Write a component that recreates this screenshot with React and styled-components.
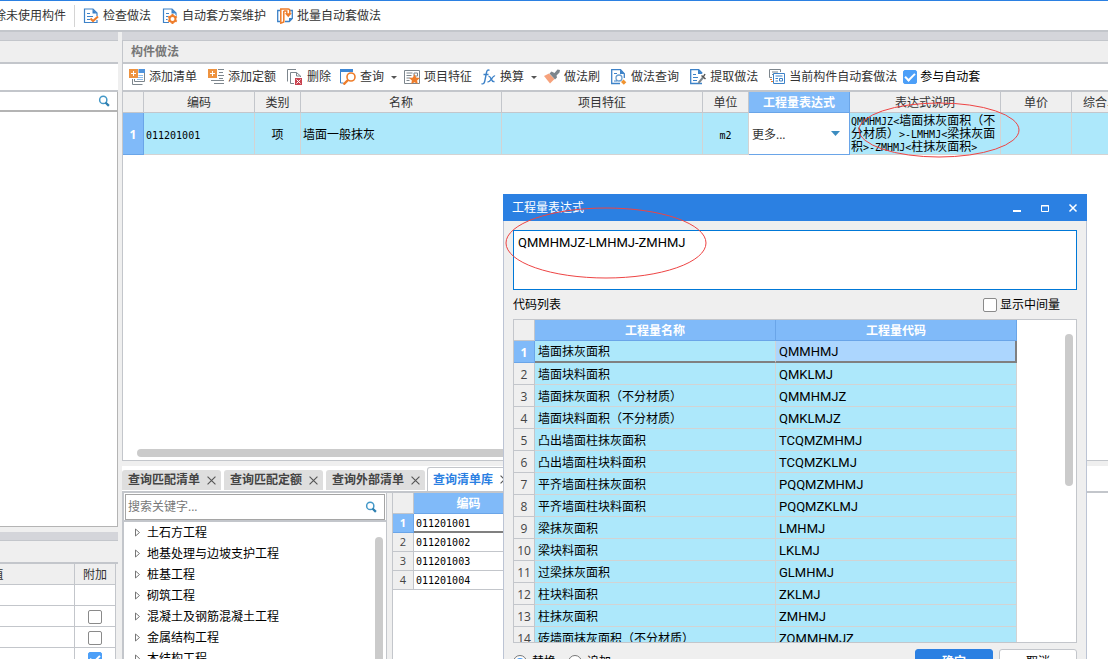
import React, { useState } from "react";
import styled, { createGlobalStyle, css } from "styled-components";

const UI_FONT = `"Open Sans", "Noto Sans CJK SC", sans-serif`;
const MONO_FONT = `"DejaVu Sans Mono", "Noto Sans CJK SC", monospace`;
const CODE_FONT = `Roboto, "Noto Sans CJK SC", sans-serif`;

const BLUE = "#2b80e2";
const LINE = "#c3c6cb";
const GRAY = "#efefef";
const ROW = "#ade8fb";

const GlobalStyle = createGlobalStyle`
    * {
        box-sizing: border-box;
    }
    body {
        margin: 0;
        overflow: hidden;
        font: 12px/16px ${UI_FONT};
        color: #000;
        background: #fff;
    }
    button, input, textarea, select {
        font: inherit;
        color: inherit;
        margin: 0;
    }
`;

/* ---------- layout ---------- */

const Page = styled.div`
    display: flex;
    flex-direction: column;
    height: 100vh;
    overflow: hidden;
    background: ${GRAY};
`;

const TopBar = styled.header`
    display: flex;
    align-items: center;
    flex: none;
    gap: 1px;
    height: 32px;
    border-top: 1px solid ${BLUE};
    border-bottom: 2px solid ${LINE};
    background: #fff;
`;

const ClippedGroup = styled.div`
    display: flex;
    justify-content: flex-end;
    width: 75px;
    padding-right: 3px;
    overflow: hidden;
    border-right: 1px solid #d4d4d4;
    margin-right: 2px;
`;

const Body = styled.div`
    display: flex;
    flex: 1;
    gap: 4px;
    min-height: 0;
`;

const Column = styled.section`
    display: flex;
    flex-direction: column;
    flex: ${(props) => props.$width || "1"};
    min-width: 0;
`;

const Band = styled.div`
    flex: none;
    height: 9px;
    background: #d4d5da;
    border-bottom: 1px solid ${LINE};
`;

const PaneTitle = styled.h2`
    flex: none;
    margin: 0;
    height: 23px;
    padding: 3px 8px;
    font-size: 12px;
    line-height: 16px;
    color: #777;
    background: ${GRAY};
    border-bottom: 2px solid ${LINE};
`;

const Toolbar = styled.div`
    display: flex;
    align-items: center;
    flex: none;
    gap: 1px;
    height: 28px;
    padding-left: 1px;
    background: #fff;
    border-bottom: 2px solid ${LINE};
    white-space: nowrap;
    overflow: hidden;
`;

const Blank = styled.div`
    flex: 1;
    min-height: 0;
    background: #fff;
    border-right: 1px solid #b4b4b4;
    border-bottom: 1px solid #b4b4b4;
`;

const LeftLower = styled.div`
    display: flex;
    flex-direction: column;
    flex: none;
    height: 132px;
    padding-top: 5px;
`;

const ClippedTable = styled.div`
    display: flex;
    justify-content: flex-end;
    align-items: flex-start;
    flex: 1;
    margin-right: 2px;
    overflow: hidden;
    background: #fff;
`;

const MainPane = styled.div`
    display: flex;
    flex-direction: column;
    flex: 1;
    min-height: 0;
    overflow: hidden;
    background: #fff;
    border-left: 1px solid ${LINE};
    border-bottom: 1px solid ${LINE};
`;

const ScrollX = styled.div`
    flex: none;
    width: 88%;
    height: 8px;
    margin: auto 0 3px 14px;
    border-radius: 4px;
    background: #cbcbcb;
`;

const ScrollY = styled.div`
    flex: none;
    width: 8px;
    height: ${(props) => props.$height};
    border-radius: 4px;
    background: #cbcbcb;
`;

const Lower = styled.div`
    display: flex;
    flex-direction: column;
    flex: none;
    height: 198px;
    padding-top: 5px;
`;

/* ---------- controls ---------- */

const ToolButton = styled.button`
    display: flex;
    align-items: center;
    flex: none;
    gap: 4px;
    height: 22px;
    padding: ${(props) => (props.$menu ? "0 1px 0 3px" : "0 5px")};
    border: 0;
    background: none;
    color: #333;

    &:hover {
        background: #eaf3fd;
    }
    svg {
        flex: none;
    }
`;

const Caret = styled.span`
    margin-left: 3px;
    border: 3px solid transparent;
    border-top-color: #555;
    border-bottom: 0;
`;

const CheckInput = styled.input`
    appearance: none;
    display: grid;
    place-items: center;
    flex: none;
    width: 14px;
    height: 14px;
    border: 1px solid #8a8a8a;
    border-radius: 2px;
    background: #fff;

    &:checked {
        border-color: #4c9ff8;
        background: #4c9ff8;
    }
    &:checked::after {
        content: "";
        width: 8px;
        height: 4px;
        border: solid #fff;
        border-width: 0 0 2px 2px;
        transform: translateY(-1px) rotate(-45deg);
    }
`;

const CheckLabel = styled.label`
    display: flex;
    align-items: center;
    gap: 3px;
    margin-left: ${(props) => props.$gap || "0"};
`;

const SearchBox = styled.div`
    display: flex;
    align-items: center;
    flex: none;
    height: ${(props) => props.$height};
    padding-right: 7px;
    background: #fff;
    ${(props) =>
        props.$boxed
            ? css`
                  margin: 1px 1px 0;
                  border: 1px solid #a5a5a5;
              `
            : css`
                  border-right: 1px solid #b4b4b4;
                  border-bottom: 2px solid #b4b4b4;
              `}

    input {
        flex: 1;
        min-width: 0;
        padding: 0 2px;
        border: 0;
        outline: 0;
        background: none;
    }
    input::placeholder {
        color: #777;
    }
`;

/* ---------- tables ---------- */

const Table = styled.table`
    flex: none;
    table-layout: fixed;
    width: ${(props) => props.$width}px;
    border-spacing: 0;

    th,
    td {
        padding: ${(props) => (props.$dense ? "0" : "2px")} 2px 0;
        border-right: 1px solid ${LINE};
        border-bottom: 1px solid ${LINE};
        overflow: hidden;
        white-space: nowrap;
    }
    td {
        padding-left: ${(props) => (props.$indent ? "3px" : "2px")};
    }
    thead th {
        height: 21px;
        padding-top: 2px;
        font-weight: normal;
        color: #333;
        background: ${GRAY};
    }
`;

const HeadCell = styled.th`
    ${(props) =>
        props.$active &&
        css`
            && {
                color: #fff;
                font-weight: bold;
                background: #80baf9;
                border-color: #6aa5e8;
            }
        `}
`;

const RowNumber = styled.th`
    height: ${(props) => props.$height}px;
    font-weight: normal;
    font-size: ${(props) => (props.$small ? "11px" : "12px")};
    color: #444;
    background: ${GRAY};
    ${(props) =>
        props.$active &&
        css`
            && {
                color: #fff;
                font-weight: bold;
                background: #80baf9;
                border-color: #6aa5e8;
            }
        `}
`;

const Cell = styled.td`
    text-align: ${(props) => props.$align || "left"};
    background: ${(props) => props.$bg || "#fff"};
    ${(props) =>
        props.$tint &&
        css`
            && {
                border-color: #d3d3d3;
            }
        `}
    ${(props) =>
        props.$current &&
        css`
            && {
                border-bottom: 2px solid #808080;
            }
        `}
    ${(props) =>
        props.$edge &&
        css`
            && {
                border-right: 2px solid #808080;
            }
        `}
`;

const SelectCell = styled(Cell)`
    && {
        padding: 0;
        border-color: #6aa5e8;
    }
`;

const SelectWrap = styled.div`
    display: flex;
    align-items: center;
    height: 40px;
    padding-right: 9px;

    select {
        flex: 1;
        min-width: 0;
        padding: 2px 3px 0;
        appearance: none;
        border: 0;
        background: none;
        color: #333;
    }
    svg {
        pointer-events: none;
    }
`;

const NoteCell = styled(Cell)`
    && {
        padding: 2px 1px 0;
        line-height: 12px;
        white-space: normal;
        word-break: break-all;
    }
`;

const Code = styled.span`
    font: 10px/12px ${MONO_FONT};
`;

/* ---------- query tabs ---------- */

const Tabs = styled.div`
    display: flex;
    align-items: flex-end;
    flex: none;
    gap: 3px;
    height: 27px;
    background: #fff;
    border-bottom: 2px solid ${LINE};
`;

const Tab = styled.div`
    display: flex;
    align-items: center;
    flex: none;
    gap: 7px;
    height: ${(props) => (props.$active ? "24px" : "20px")};
    padding: 0 5px 0 6px;
    border-radius: 3px 3px 0 0;
    background: #dedede;
    color: #444;
    font-weight: bold;
    margin-bottom: 1px;
    ${(props) =>
        props.$active &&
        css`
            margin-bottom: 0;
            margin-left: -1px;
            padding-left: 5px;
            border: 1px solid ${LINE};
            border-bottom: 0;
            background: #fff;
            color: ${BLUE};
        `}

    button {
        display: flex;
        padding: 0;
        border: 0;
        background: none;
        color: inherit;
    }
    button:first-child {
        font-weight: bold;
    }
`;

const QueryBody = styled.div`
    display: flex;
    flex: 1;
    gap: 5px;
    min-height: 0;
`;

const TreePane = styled.div`
    display: flex;
    flex-direction: column;
    flex: none;
    width: 265px;
    border-left: 2px solid ${LINE};
    border-right: 1px solid ${LINE};
    background: #fff;
`;

const TreeBody = styled.div`
    display: flex;
    justify-content: space-between;
    align-items: flex-start;
    flex: 1;
    min-height: 0;
    overflow: hidden;
    padding-right: 3px;
    border-top: 2px solid ${LINE};

    ${ScrollY} {
        margin-top: 15px;
    }
`;

const Tree = styled.ul`
    list-style: none;
    margin: 0;
    padding: 0 0 0 11px;

    li {
        display: flex;
        align-items: center;
        gap: 6px;
        height: 21px;
    }
`;

const ListPane = styled.div`
    flex: 1;
    min-width: 0;
    overflow: hidden;
    background: #fff;
    border-left: 1px solid ${LINE};
`;

/* ---------- dialog ---------- */

const Dialog = styled.section`
    position: absolute;
    top: 194px;
    left: 503px;
    width: 584px;
    background: ${GRAY};
    border: solid #bcc4d4;
    border-width: 0 1px 1px;
`;

const DialogTitle = styled.div`
    display: flex;
    align-items: center;
    justify-content: space-between;
    height: 27px;
    margin: 0 -1px;
    padding: 0 8px 0 9px;
    background: ${BLUE};
    color: #fff;

    h1 {
        margin: 0;
        font-size: 12px;
        font-weight: normal;
    }
`;

const WindowButtons = styled.div`
    display: flex;
    gap: 16px;

    button {
        display: flex;
        padding: 0;
        border: 0;
        background: none;
    }
`;

const DialogBody = styled.div`
    display: flex;
    flex-direction: column;
    padding: 9px 9px 8px;
`;

const Expression = styled.textarea`
    display: block;
    width: 100%;
    height: 60px;
    padding: 4px;
    border: 1px solid #0078d7;
    border-radius: 0;
    outline: 0;
    resize: none;
    background: #fff;
    && {
        font: 13px/16px ${CODE_FONT};
    }
`;

const Caption = styled.div`
    display: flex;
    align-items: center;
    justify-content: space-between;
    height: 29px;
    padding-right: 17px;
`;

const CodeList = styled.div`
    display: flex;
    align-items: flex-start;
    justify-content: space-between;
    height: 324px;
    padding-right: 3px;
    overflow: hidden;
    border: 1px solid ${LINE};
    background: #fff;

    ${ScrollY} {
        margin-top: 14px;
    }
`;

const CodeCell = styled(Cell)`
    font: 13px/16px ${CODE_FONT};
`;

const Footer = styled.div`
    display: flex;
    align-items: center;
    gap: 6px;
    padding-top: 6px;
`;

const RadioLabel = styled.label`
    display: flex;
    align-items: center;
    gap: 5px;
    margin-right: 6px;

    input {
        appearance: none;
        display: grid;
        place-items: center;
        width: 14px;
        height: 14px;
        border: 1px solid #777;
        border-radius: 50%;
        background: #fff;
    }
    input:checked::after {
        content: "";
        width: 8px;
        height: 8px;
        border-radius: 50%;
        background: #4c9ff8;
    }
`;

const DialogButton = styled.button`
    width: 78px;
    height: 26px;
    border: 1px solid ${(props) => (props.$primary ? BLUE : LINE)};
    border-radius: 3px;
    background: ${(props) => (props.$primary ? BLUE : "#fff")};
    color: ${(props) => (props.$primary ? "#fff" : "#000")};
    font-weight: ${(props) => (props.$primary ? "bold" : "normal")};
    margin-left: ${(props) => (props.$primary ? "auto" : "0")};
`;

/* hand drawn rings lying over the page */
const Ring = styled.svg`
    position: absolute;
    top: ${(props) => props.$top}px;
    left: ${(props) => props.$left}px;
    pointer-events: none;
`;

/* ---------- icons ---------- */

const Svg = ({ children, size = 16 }) => (
    <svg width={size} height={size} viewBox="0 0 16 16" fill="none" aria-hidden="true">
        {children}
    </svg>
);

const B = "#3d82c8";
const O = "#ee7d2b";
const G = "#7d868d";

const Sheet = () => (
    <>
        <path d="M14 8V5l-4-4H1.500v13.500H7" stroke={B} strokeWidth="1.200" />
        <path d="M9.500 1v4.500H14z" fill={B} />
        <path d="M4 5.500h3M4 8.500h6M4 11.500h3" stroke={B} />
    </>
);

const icons = {
    check: (
        <Svg>
            <Sheet />
            <path d="M7 14.500h7V12" stroke={B} strokeWidth="1.200" />
            <path d="M7.500 10.500l2.500 2.500 5-4.500" stroke={O} strokeWidth="2" />
        </Svg>
    ),
    gear: (
        <Svg>
            <Sheet />
            <circle cx="10.500" cy="11" r="5" fill="#fff" />
            <circle cx="10.500" cy="11" r="3" stroke={O} strokeWidth="2" />
            <path
                d="M10.500 6v2M10.500 14v2M6.200 8.500l1.700 1M13.100 12.500l1.700 1M14.800 8.500l-1.700 1M7.900 12.500l-1.700 1"
                stroke={O}
                strokeWidth="2"
            />
        </Svg>
    ),
    batch: (
        <Svg>
            <path d="M3 2.500H.7v11H3" stroke={B} strokeWidth="1.300" />
            <path d="M13 2.500h2.300v8l-3 3H8" stroke={B} strokeWidth="1.300" />
            <path d="M15.500 10h-3.500v4z" fill={B} />
            <path d="M6.800 3v11l-3 1.200V.900h7.500c1 0 1.500.700 1.500 2v3" stroke={O} strokeWidth="1.500" />
            <path d="M6.800 3h3v3.500" stroke={O} strokeWidth="1.400" />
            <path d="M7.800 5.200h7l-3.500 4z" fill={O} />
        </Svg>
    ),
    addList: (
        <Svg>
            <path d="M10 .5h5.500v12H5.500V10" stroke={G} />
            <path d="M9.500 0H16v4H9.500z" fill="#4f93dc" />
            <path d="M9.500 6.500H14M8 8.500h6M8 10.500h6" stroke="#8dbbe8" />
            <path d="M3.500 10v5.500h10" stroke={G} />
            <path d="M0 0h9v9H0z" fill="#ee9340" />
            <path d="M4.500 2v5M2 4.500h5" stroke="#fff" />
        </Svg>
    ),
    addQuota: (
        <Svg>
            <path d="M10 .5h6M11 3.500h4M10 6.500h6M11 9.500h4M3 11.500h13M6 14.500h10" stroke={G} />
            <path d="M0 0h9v9H0z" fill="#ee9340" />
            <path d="M4.500 2v5M2 4.500h5" stroke="#fff" />
        </Svg>
    ),
    remove: (
        <Svg>
            <path d="M.500 12.500V.500H9M3.500 14.500v-11h6l4 3.500v1M9.500 3.500V7h4M3.500 14.500H7" stroke={G} />
            <path d="M8 9h7v7H8z" fill="#c9434f" />
            <path d="M9.500 10.500l4 4M13.500 10.500l-4 4" stroke="#fff" />
        </Svg>
    ),
    query: (
        <Svg>
            <path d="M.5 2v12h3" stroke={B} />
            <path d="M0 0h13v3H0z" fill="#3d87d5" />
            <circle cx="11" cy="8" r="4" fill="#fff" stroke={O} strokeWidth="1.600" />
            <path d="M8 11l-4.500 4.500" stroke={O} strokeWidth="2.400" />
        </Svg>
    ),
    feature: (
        <Svg>
            <path d="M.5 1.500h15v13H.500z" stroke={G} />
            <path d="M2.500 4h6M2.500 6.500h5M2.500 9h4M2.500 11.500h3M10 4h3.500v3H10z" stroke={G} />
            <path d="M10.500 5l1.600 3.400 3.700.500-2.700 2.500.700 3.700-3.300-1.800L7.200 15.100l.700-3.700-2.700-2.500 3.700-.500z" fill={O} />
        </Svg>
    ),
    fx: (
        <svg width="15" height="16" viewBox="0 0 15 16" fill="none" aria-hidden="true">
            <path
                d="M8.500 1.300C6.800.300 5.900 1.500 5.400 4L3.800 12c-.500 2.500-1.500 3.300-3.300 2.600M2.500 5.500h5"
                stroke={B}
                strokeWidth="1.400"
            />
            <path d="M7.500 7.500c2.800-1.200 2.500 6.500 6 5M14 7c-2.300-1-4.300 6.500-7.500 5.800" stroke={B} strokeWidth="1.400" />
        </svg>
    ),
    brush: (
        <Svg>
            <path d="M0 7l5-2.500 5.500 5.500L6 14.500z" fill="#f6a27c" />
            <path d="M5.500 4.500l2-2 3 1.500L13.500.500 16 1l-.500 2.500-3 3 .5 2-2 2z" fill={G} />
        </Svg>
    ),
    find: (
        <Svg>
            <path d="M9 14.500H.700V.700h8.800l3.800 4V9" stroke={B} strokeWidth="1.300" />
            <path d="M9 .500v4.500h4.500z" fill={B} />
            <circle cx="8" cy="9" r="3" stroke="#6d9fd0" strokeWidth="1.300" />
            <path d="M3 4.500h3M3 12h3" stroke={B} />
            <path d="M12.500 10.500l2.800 2.800-2.500 2.500-2.800-2.800z" fill="#f0932f" />
        </Svg>
    ),
    extract: (
        <Svg>
            <path d="M12 14.500H.700V.700h8l3.500 3.500" stroke={B} strokeWidth="1.300" />
            <path d="M8 .500v4.500h4.500z" fill={B} />
            <path d="M3 5.500h3M3 8.500h5M3 11.500h4" stroke={B} />
            <path d="M8.500 14l4.500-5.500" stroke={G} strokeWidth="2" />
            <path d="M11.500 6.500l4 3.500M15 5l-2 3.500" stroke="#555" strokeWidth="1.500" />
        </Svg>
    ),
    current: (
        <Svg>
            <path d="M3 8.500H.500v-8h11V3M3 3h6M3 5.500h1" stroke={G} />
            <path d="M1 10.500h2M2 12.500h2" stroke={O} />
            <path d="M4.500 4.500h11v10h-11z" stroke={B} />
            <path d="M6.500 7h7M6.500 9.500H9M6.500 12H9M10.500 9.500h3V12h-3z" stroke={B} />
        </Svg>
    ),
    search: (
        <Svg size={12}>
            <circle cx="7" cy="6.500" r="4.800" stroke="#4398c8" strokeWidth="2" />
            <path d="M10 10l4.500 4.500" stroke="#2e7fb0" strokeWidth="3" />
        </Svg>
    ),
    close: (
        <Svg size={9}>
            <path d="M1 1l14 14M15 1L1 15" stroke="#555" strokeWidth="2" />
        </Svg>
    ),
};

/* ---------- data ---------- */

const topTools = [
    ["check", "检查做法"],
    ["gear", "自动套方案维护"],
    ["batch", "批量自动套做法"],
];

const tools = [
    ["addList", "添加清单"],
    ["addQuota", "添加定额"],
    ["remove", "删除"],
    ["query", "查询", true],
    ["feature", "项目特征"],
    ["fx", "换算", true],
    ["brush", "做法刷"],
    ["find", "做法查询"],
    ["extract", "提取做法"],
    ["current", "当前构件自动套做法"],
];

const columns = [
    ["", 21],
    ["编码", 111],
    ["类别", 46],
    ["名称", 201],
    ["项目特征", 201],
    ["单位", 46],
    ["工程量表达式", 101],
    ["表达式说明", 151],
    ["单价", 71],
    ["综合单价", 71],
];

const tabs = ["查询匹配清单", "查询匹配定额", "查询外部清单", "查询清单库"];

const tree = [
    "土石方工程",
    "地基处理与边坡支护工程",
    "桩基工程",
    "砌筑工程",
    "混凝土及钢筋混凝土工程",
    "金属结构工程",
    "木结构工程",
];

const listCodes = ["011201001", "011201002", "011201003", "011201004"];

const quantities = [
    ["墙面抹灰面积", "QMMHMJ"],
    ["墙面块料面积", "QMKLMJ"],
    ["墙面抹灰面积（不分材质）", "QMMHMJZ"],
    ["墙面块料面积（不分材质）", "QMKLMJZ"],
    ["凸出墙面柱抹灰面积", "TCQMZMHMJ"],
    ["凸出墙面柱块料面积", "TCQMZKLMJ"],
    ["平齐墙面柱抹灰面积", "PQQMZMHMJ"],
    ["平齐墙面柱块料面积", "PQQMZKLMJ"],
    ["梁抹灰面积", "LMHMJ"],
    ["梁块料面积", "LKLMJ"],
    ["过梁抹灰面积", "GLMHMJ"],
    ["柱块料面积", "ZKLMJ"],
    ["柱抹灰面积", "ZMHMJ"],
    ["砖墙面抹灰面积（不分材质）", "ZQMMHMJZ"],
];

/* ---------- parts ---------- */

const Cols = ({ widths }) => (
    <colgroup>
        {widths.map((w, i) => (
            <col key={i} style={{ width: w }} />
        ))}
    </colgroup>
);

function LeftColumn() {
    return (
        <Column $width="0 0 118px">
            <Band />
            <PaneTitle />
            <Toolbar />
            <SearchBox $height="20px">
                <input type="text" aria-label="搜索构件" />
                {icons.search}
            </SearchBox>
            <Blank />
            <LeftLower>
                <Band />
                <PaneTitle />
                <ClippedTable>
                    <Table $width={219}>
                        <Cols widths={[178, 41]} />
                        <thead>
                            <tr>
                                <HeadCell>属性值</HeadCell>
                                <HeadCell>附加</HeadCell>
                            </tr>
                        </thead>
                        <tbody>
                            {[null, false, false, true].map((on, i) => (
                                <tr key={i} style={{ height: 21 }}>
                                    <Cell />
                                    <Cell>
                                        {on !== null && (
                                            <CheckLabel $gap="11px">
                                                <CheckInput
                                                    type="checkbox"
                                                    aria-label="附加"
                                                    defaultChecked={on}
                                                />
                                            </CheckLabel>
                                        )}
                                    </Cell>
                                </tr>
                            ))}
                        </tbody>
                    </Table>
                </ClippedTable>
            </LeftLower>
        </Column>
    );
}

function MethodTable() {
    return (
        <Table $width={1020}>
            <Cols widths={columns.map((c) => c[1])} />
            <thead>
                <tr>
                    {columns.map(([name]) => (
                        <HeadCell key={name} $active={name === "工程量表达式"}>
                            {name}
                        </HeadCell>
                    ))}
                </tr>
            </thead>
            <tbody>
                <tr>
                    <RowNumber $height={41} $active>
                        1
                    </RowNumber>
                    <Cell $bg={ROW} $tint>
                        <Code>011201001</Code>
                    </Cell>
                    <Cell $bg={ROW} $tint $align="center">
                        项
                    </Cell>
                    <Cell $bg={ROW} $tint>
                        墙面一般抹灰
                    </Cell>
                    <Cell $bg={ROW} $tint />
                    <Cell $bg={ROW} $tint $align="center">
                        <Code>m2</Code>
                    </Cell>
                    <SelectCell>
                        <SelectWrap>
                            <select aria-label="工程量表达式">
                                <option>更多...</option>
                            </select>
                            <svg width="9" height="5" aria-hidden="true">
                                <path d="M0 0h9L4.500 5z" fill="#3c8cc0" />
                            </svg>
                        </SelectWrap>
                    </SelectCell>
                    <NoteCell $bg={ROW} $tint>
                        <Code>QMMHMJZ&lt;</Code>墙面抹灰面积（不分材质）
                        <Code>&gt;-LMHMJ&lt;</Code>梁抹灰面积
                        <Code>&gt;-ZMHMJ&lt;</Code>柱抹灰面积<Code>&gt;</Code>
                    </NoteCell>
                    <Cell $bg={ROW} $tint />
                    <Cell $bg={ROW} $tint />
                </tr>
            </tbody>
        </Table>
    );
}

function QueryPane() {
    return (
        <Lower>
            <Tabs>
                {tabs.map((name, i) => (
                    <Tab key={name} $active={i === 3}>
                        <button type="button">{name}</button>
                        <button type="button" aria-label="关闭">
                            {icons.close}
                        </button>
                    </Tab>
                ))}
            </Tabs>
            <QueryBody>
                <TreePane>
                    <SearchBox $height="26px" $boxed>
                        <input type="text" aria-label="搜索关键字" placeholder="搜索关键字..." />
                        {icons.search}
                    </SearchBox>
                    <TreeBody>
                        <Tree>
                            {tree.map((name) => (
                                <li key={name}>
                                    <svg width="6" height="9" fill="none" aria-hidden="true">
                                        <path d="M.5 1v7l4-3.500z" stroke="#777" />
                                    </svg>
                                    {name}
                                </li>
                            ))}
                        </Tree>
                        <ScrollY $height="150px" />
                    </TreeBody>
                </TreePane>
                <ListPane>
                    <Table $width={131} $dense>
                        <Cols widths={[21, 110]} />
                        <thead>
                            <tr>
                                <HeadCell />
                                <HeadCell $active>编码</HeadCell>
                            </tr>
                        </thead>
                        <tbody>
                            {listCodes.map((code, i) => (
                                <tr key={code}>
                                    <RowNumber $height={19} $small $active={i === 0}>
                                        {i + 1}
                                    </RowNumber>
                                    <Cell $current={i === 0}>
                                        <Code>{code}</Code>
                                    </Cell>
                                </tr>
                            ))}
                        </tbody>
                    </Table>
                </ListPane>
            </QueryBody>
        </Lower>
    );
}

function ExpressionDialog() {
    const [value, setValue] = useState("QMMHMJZ-LMHMJ-ZMHMJ");

    return (
        <Dialog role="dialog" aria-label="工程量表达式">
            <DialogTitle>
                <h1>工程量表达式</h1>
                <WindowButtons>
                    <button type="button" aria-label="最小化">
                        <svg width="12" height="10">
                            <path d="M2 7h8v2H2z" fill="#fff" />
                        </svg>
                    </button>
                    <button type="button" aria-label="最大化">
                        <svg width="12" height="10" fill="none">
                            <path d="M2.500 2.500h7v6h-7zM2 3h8" stroke="#fff" />
                        </svg>
                    </button>
                    <button type="button" aria-label="关闭">
                        <svg width="12" height="10" fill="none">
                            <path d="M2.500 1.500l7 7M9.500 1.500l-7 7" stroke="#fff" strokeWidth="1.500" />
                        </svg>
                    </button>
                </WindowButtons>
            </DialogTitle>
            <DialogBody>
                <Expression
                    aria-label="工程量表达式"
                    spellCheck={false}
                    value={value}
                    onChange={(e) => setValue(e.target.value)}
                />
                <Caption>
                    <span>代码列表</span>
                    <CheckLabel>
                        <CheckInput type="checkbox" />
                        显示中间量
                    </CheckLabel>
                </Caption>
                <CodeList>
                    <Table $width={503} $indent>
                        <Cols widths={[21, 241, 241]} />
                        <thead>
                            <tr>
                                <HeadCell />
                                <HeadCell $active>工程量名称</HeadCell>
                                <HeadCell $active>工程量代码</HeadCell>
                            </tr>
                        </thead>
                        <tbody>
                            {quantities.map(([name, code], i) => (
                                <tr key={code}>
                                    <RowNumber $height={22} $active={i === 0}>
                                        {i + 1}
                                    </RowNumber>
                                    <Cell $bg={ROW} $tint $current={i === 0}>
                                        {name}
                                    </Cell>
                                    <CodeCell
                                        $bg={i === 0 ? "#acd6fe" : ROW}
                                        $tint
                                        $current={i === 0}
                                        $edge={i === 0}
                                    >
                                        {code}
                                    </CodeCell>
                                </tr>
                            ))}
                        </tbody>
                    </Table>
                    <ScrollY $height="152px" />
                </CodeList>
                <Footer>
                    <RadioLabel>
                        <input type="radio" name="mode" defaultChecked />
                        替换
                    </RadioLabel>
                    <RadioLabel>
                        <input type="radio" name="mode" />
                        追加
                    </RadioLabel>
                    <DialogButton type="button" $primary>
                        确定
                    </DialogButton>
                    <DialogButton type="button">取消</DialogButton>
                </Footer>
            </DialogBody>
        </Dialog>
    );
}

export default function App() {
    return (
        <Page>
            <GlobalStyle />
            <TopBar>
                <ClippedGroup>
                    <ToolButton type="button">除未使用构件</ToolButton>
                </ClippedGroup>
                {topTools.map(([icon, name]) => (
                    <ToolButton key={name} type="button">
                        {icons[icon]}
                        {name}
                    </ToolButton>
                ))}
            </TopBar>
            <Body>
                <LeftColumn />
                <Column>
                    <Band />
                    <MainPane>
                        <PaneTitle>构件做法</PaneTitle>
                        <Toolbar>
                            {tools.map(([icon, name, menu]) => (
                                <ToolButton key={name} type="button" $menu={menu}>
                                    {icons[icon]}
                                    {name}
                                    {menu && <Caret />}
                                </ToolButton>
                            ))}
                            <CheckLabel>
                                <CheckInput type="checkbox" defaultChecked />
                                参与自动套
                            </CheckLabel>
                        </Toolbar>
                        <MethodTable />
                        <ScrollX />
                    </MainPane>
                    <QueryPane />
                </Column>
            </Body>
            <ExpressionDialog />
            <Ring $top={102} $left={858} width="163" height="57" fill="none">
                <ellipse cx="81" cy="28" rx="80" ry="27" stroke="#ee4444" />
            </Ring>
            <Ring $top={207} $left={505} width="203" height="72" fill="none">
                <ellipse cx="101" cy="36" rx="100" ry="35" stroke="#ee4444" />
            </Ring>
        </Page>
    );
}
